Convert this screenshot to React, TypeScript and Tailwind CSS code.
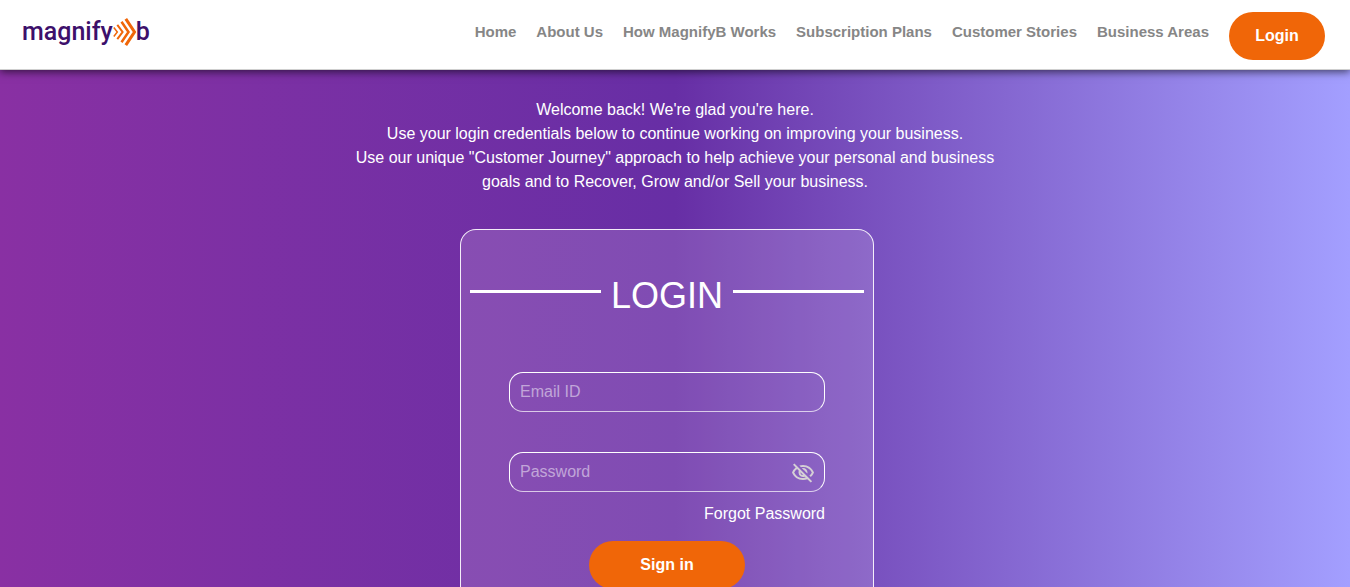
import { useState } from "react";
import { MdOutlineVisibility, MdOutlineVisibilityOff } from "react-icons/md";

const links = [
  "Home",
  "About Us",
  "How MagnifyB Works",
  "Subscription Plans",
  "Customer Stories",
  "Business Areas",
];

function Logo() {
  return (
    <a
      href="#"
      aria-label="magnifyb"
      className="flex items-center font-[Roboto,sans-serif] text-[25px] leading-8 font-medium text-[#3d106b]"
    >
      <span>magnify</span>
      <svg width="23" height="30" viewBox="0 0 23 30" fill="none" stroke="#f06608" aria-hidden="true">
        <path d="M0.8 10.5 4.3 15 0.8 19.5" strokeWidth="1.5" />
        <path d="M4.3 7.800 9.600 15 4.300 22.200" strokeWidth="2" />
        <path d="M8.500 4.800 15.500 15 8.500 25.200" strokeWidth="2.500" />
        <path d="M12.800 1.800 21.500 15 12.800 28.200" strokeWidth="3" />
      </svg>
      <span>b</span>
    </a>
  );
}

function Header() {
  return (
    <header className="relative z-10 flex h-[70px] items-start justify-between border-b border-[#cfcfcf] bg-white px-[25px] pl-[22px] shadow-[0_2px_8px_rgba(0,0,0,0.6)]">
      <div className="pt-4">
        <Logo />
      </div>
      <nav className="flex items-start gap-5 pt-3 text-[15px] leading-6 font-bold text-[#868686]">
        {links.map((label) => (
          <a key={label} href="#" className="pt-2 whitespace-nowrap">
            {label}
          </a>
        ))}
        <button type="button" className="h-12 w-24 rounded-full bg-[#f06608] text-base text-white">
          Login
        </button>
      </nav>
    </header>
  );
}

const fieldClass =
  "h-10 w-full rounded-[14px] border border-white border-b-white/70 bg-transparent px-2.5 text-base text-white placeholder:text-white/50 outline-none";

function LoginCard() {
  const [visible, setVisible] = useState(false);
  return (
    <section className="w-full max-w-[414px] rounded-2xl border border-white/90 bg-[rgba(255,238,255,0.16)] pt-10 pb-16">
      <div className="flex items-center gap-2.5 px-[9px]">
        <span className="mb-2.5 h-[3px] flex-1 bg-white" />
        <h1 className="text-4xl leading-[52px]">LOGIN</h1>
        <span className="mb-2.5 h-[3px] flex-1 bg-white" />
      </div>
      <form className="flex flex-col px-12 pt-[50px]" onSubmit={(e) => e.preventDefault()}>
        <input type="email" aria-label="Email ID" placeholder="Email ID" className={fieldClass} />
        <div className="relative mt-10">
          <input
            type={visible ? "text" : "password"}
            aria-label="Password"
            placeholder="Password"
            className={fieldClass}
          />
          <button
            type="button"
            aria-label="Show password"
            onClick={() => setVisible(!visible)}
            className="absolute top-[9px] right-2.5 text-2xl text-[#d5d0d5]"
          >
            {visible ? <MdOutlineVisibility /> : <MdOutlineVisibilityOff />}
          </button>
        </div>
        <a href="#" className="mt-2.5 self-end">
          Forgot Password
        </a>
        <button
          type="submit"
          className="mt-[15px] h-12 w-[156px] self-center rounded-full bg-[#f06608] font-bold text-white"
        >
          Sign in
        </button>
      </form>
    </section>
  );
}

export default function App() {
  return (
    <div className="flex min-h-screen flex-col bg-linear-to-r from-[#8930a3] via-[#672ea5] to-[#a39fff] font-['Liberation_Sans',Arial,sans-serif] text-base leading-6 text-white">
      <Header />
      <main className="flex flex-col items-center px-4 pt-7">
        <p className="max-w-[675px] text-center">
          Welcome back! We're glad you're here.
          <br />
          Use your login credentials below to continue working on improving your business.
          <br />
          Use our unique "Customer Journey" approach to help achieve your personal and business
          goals and to Recover, Grow and/or Sell your business.
        </p>
        <div className="flex w-full justify-center pt-[35px] pr-4 pb-10">
          <LoginCard />
        </div>
      </main>
    </div>
  );
}
